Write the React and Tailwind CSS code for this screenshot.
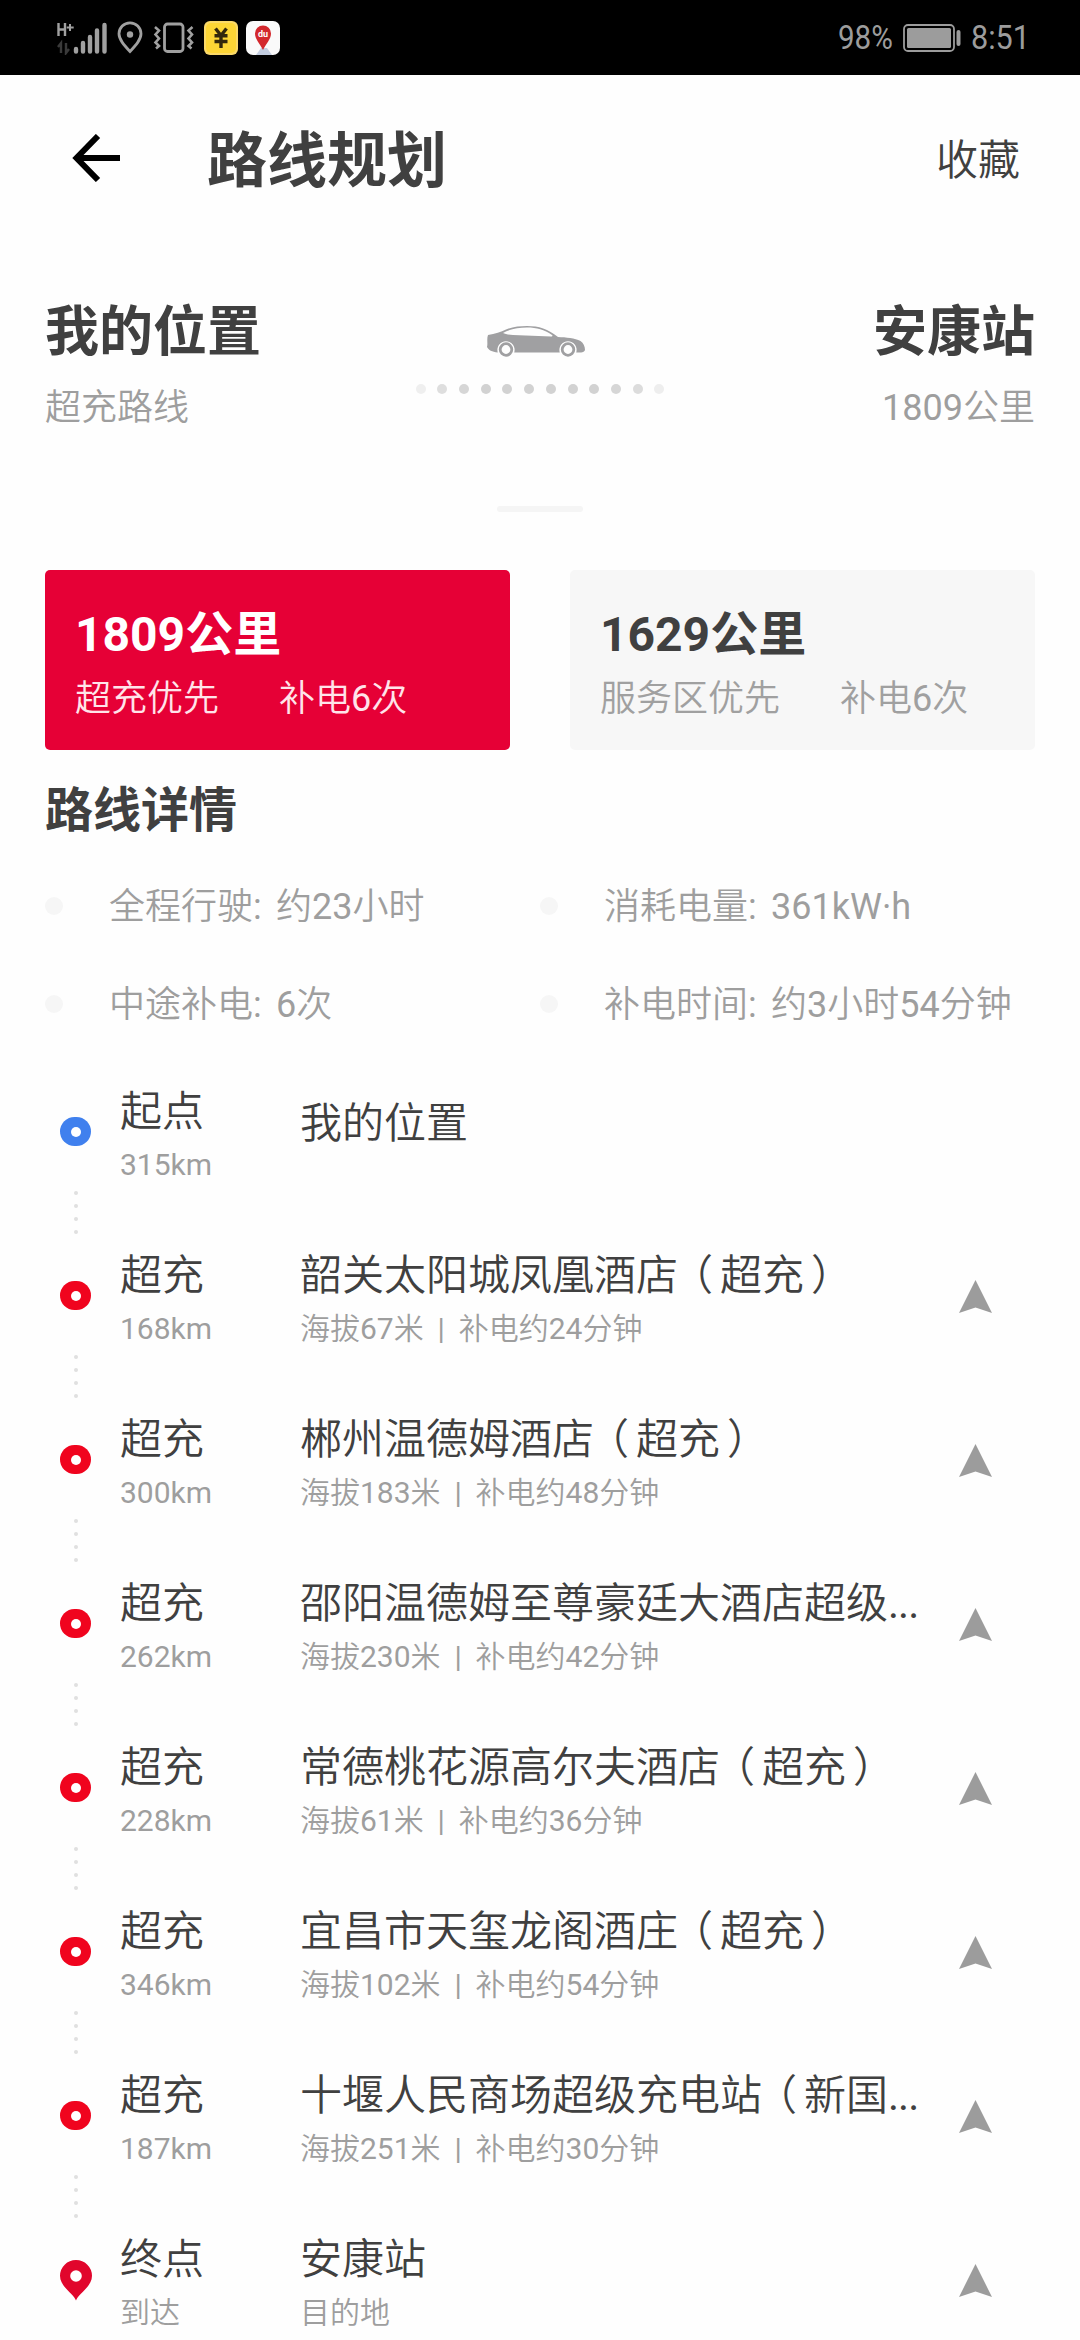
const STOPS = [
  { kind: "start", label: "起点", km: "315km", name: "我的位置" },
  { kind: "stop", label: "超充", km: "168km", name: "韶关太阳城凤凰酒店（超充）", note: ["海拔67米", "补电约24分钟"] },
  { kind: "stop", label: "超充", km: "300km", name: "郴州温德姆酒店（超充）", note: ["海拔183米", "补电约48分钟"] },
  { kind: "stop", label: "超充", km: "262km", name: "邵阳温德姆至尊豪廷大酒店超级...", note: ["海拔230米", "补电约42分钟"] },
  { kind: "stop", label: "超充", km: "228km", name: "常德桃花源高尔夫酒店（超充）", note: ["海拔61米", "补电约36分钟"] },
  { kind: "stop", label: "超充", km: "346km", name: "宜昌市天玺龙阁酒庄（超充）", note: ["海拔102米", "补电约54分钟"] },
  { kind: "stop", label: "超充", km: "187km", name: "十堰人民商场超级充电站（新国...", note: ["海拔251米", "补电约30分钟"] },
  { kind: "end", label: "终点", km: "到达", name: "安康站", note: ["目的地"] },
];

const DETAILS = [
  ["全程行驶:", "约23小时"],
  ["消耗电量:", "361kW·h"],
  ["中途补电:", "6次"],
  ["补电时间:", "约3小时54分钟"],
];

/* Sets digits and Latin letters at normal weight beside lighter Chinese,
   and centres full-width brackets in their cell. */
function Mixed({ text }) {
  return text.split(/([\x20-\x7e·]+|[（）])/).map((part, i) => {
    if (part === "（") return <span key={i} className="pr-[7px] pl-[14px] [font-feature-settings:'halt']">（</span>;
    if (part === "）") return <span key={i} className="pr-[14px] pl-[7px] [font-feature-settings:'halt']">）</span>;
    if (part === "...") return <span key={i} className="font-normal tracking-[-1px]">...</span>;
    return i % 2 ? <span key={i} className="font-normal">{part}</span> : part;
  });
}

function StatusBar() {
  return (
    <div className="flex h-[75px] shrink-0 items-center justify-between bg-black pr-[52px] pl-[56px] text-[#9c9c9c]">
      <div className="flex items-center">
        <svg width="52" height="34" viewBox="0 0 52 34" fill="none" stroke="#a0a0a0">
          <path d="M2.5 2v13M9 2v13M2.5 8.5H9" strokeWidth="2.4" />
          <path d="M14 3v7M10.7 6.5h7" strokeWidth="2" />
          <path d="M5 32V22l-3 4M10 22v10l3-4" stroke="#3a3a3a" strokeWidth="2.4" />
          <path d="M20 28v2.500M27 22v8.500M34 16v14.500M41 9.500v21M48.500 4v26.500" strokeWidth="4.400" strokeLinecap="round" />
        </svg>
        <svg className="ml-[9px]" width="26" height="34" viewBox="0 0 26 34" fill="none">
          <path d="M13 30.500C7 24 2 18.500 2 12.800a11 11 0 0 1 22 0C24 18.500 19 24 13 30.500Z" stroke="#a0a0a0" strokeWidth="2.800" />
          <circle cx="13" cy="13.500" r="3.200" fill="#a0a0a0" />
        </svg>
        <svg className="ml-[10px]" width="42" height="34" viewBox="0 0 42 34" fill="none" stroke="#a0a0a0">
          <rect x="11.500" y="3" width="18.500" height="27.500" rx="3" strokeWidth="2.800" />
          <path d="M2 6l4 3.500-3.500 4L6 17.500 2.500 21.500 6 25l-3 2.500M39.500 6l-4 3.500 3.500 4-3.500 4 3.500 4-3.500 3.500 3 2.500" strokeWidth="2.600" />
        </svg>
        <svg className="ml-[9px]" width="34" height="34" viewBox="0 0 34 34">
          <rect width="34" height="34" rx="6" fill="#fbd968" />
          <rect x="2" y="2" width="30" height="30" rx="5" fill="#fdd535" />
          <path d="M11.500 7.500l5.500 7 5.500-7M10.500 14.800h13M10.500 20.500h13M17 14v13" fill="none" stroke="#33270c" strokeWidth="3.400" />
        </svg>
        <svg className="ml-[8px]" width="34" height="34" viewBox="0 0 34 34">
          <rect width="34" height="34" rx="7" fill="#fafafa" />
          <path d="M10 34l5-7h6l5 7Z" fill="#c3cde0" />
          <path d="M17 29C13.500 22 9 18 9 12.500a8 8 0 0 1 16 0C25 18 20.500 22 17 29Z" fill="#d3282d" />
          <text x="17" y="16" textAnchor="middle" fontSize="9" fontWeight="700" fill="#fff" fontFamily="Roboto, sans-serif">du</text>
        </svg>
      </div>
      <div className="flex items-center text-[34px] leading-[77px]">
        <span className="w-[55px] origin-left scale-x-[0.87] whitespace-nowrap">98%</span>
        <svg className="ml-[10px]" width="58" height="28" viewBox="0 0 58 28">
          <rect x="1" y="1" width="50" height="26" rx="4" fill="none" stroke="#9c9c9c" strokeWidth="1.800" />
          <rect x="4" y="4" width="44" height="20" rx="1.500" fill="#9c9c9c" />
          <rect x="53.500" y="6" width="4" height="16" rx="2" fill="#9c9c9c" />
        </svg>
        <span className="ml-[10px] w-[57px] origin-left scale-x-[0.9] whitespace-nowrap">8:51</span>
      </div>
    </div>
  );
}

function Car() {
  return (
    <svg width="98" height="32" viewBox="0 0 98 32">
      <path
        fill="#a0a0a2"
        fillRule="evenodd"
        d="M1 9C8 8 14 6 19 3.500 25 .8 33 0 40 0 52 0 61 3 71 11c8 .4 17 1 22.500 4 3 2 4.500 5.500 4.500 9-.5 1.500-2 2.500-4 2.500h-4.800a8.600 8.600 0 1 0-16.400 0H27.200a8.600 8.600 0 1 0-16.400 0C5 26 1.500 24 0 21c1-4-.5-8 1-12ZM16 7c2 1.200 6 1.800 10 2l38 1.500c1.500 0 2-.8 1-1.600C57 3.500 50 1.500 40 1.500 31 1.500 23 3 16 7Z"
      />
      <circle cx="19" cy="23.500" r="5.800" fill="none" stroke="#a0a0a2" strokeWidth="2.800" />
      <circle cx="81" cy="23.500" r="5.800" fill="none" stroke="#a0a0a2" strokeWidth="2.800" />
    </svg>
  );
}

const TRAIL = [
  "bg-[#efefef]", "bg-[#dedede]", "bg-[#d6d6d6]", "bg-[#d2d2d2]", "bg-[#d2d2d2]", "bg-[#d2d2d2]",
  "bg-[#d2d2d2]", "bg-[#d2d2d2]", "bg-[#d2d2d2]", "bg-[#d6d6d6]", "bg-[#dcdcdc]", "bg-[#eeeeee]",
];

function RouteCard({ active, distance, mode }) {
  return (
    <div className={`h-[180px] w-[465px] rounded-[5px] px-[30px] pt-[35px] ${active ? "bg-[#e60036] text-white" : "bg-[#f7f7f7] text-[#404040]"}`}>
      <div className="h-[60px] text-[48px] leading-[60px] font-bold">{distance}</div>
      <div className={`mt-[10px] flex h-[48px] gap-[60px] text-[36px] leading-[48px] font-[350] ${active ? "text-[#ffe4ea]" : "text-[#a0a0a0]"}`}>
        <span>{mode}</span>
        <span><Mixed text="补电6次" /></span>
      </div>
    </div>
  );
}

function Marker({ kind }) {
  if (kind === "end") {
    return (
      <svg className="mt-[42px]" width="32" height="41" viewBox="0 0 32 41">
        <path d="M16 40.500C14 34 0 27 0 15.800a16 15.800 0 0 1 32 0C32 27 18 34 16 40.500Z" fill="#e1062c" />
        <circle cx="16" cy="16" r="5.800" fill="#fff" />
      </svg>
    );
  }
  return (
    <span className={`mt-[47px] flex size-[31px] items-center justify-center rounded-full ${kind === "start" ? "bg-[#4080ee]" : "bg-[#f0041e]"}`}>
      <span className="size-[10px] rounded-full bg-white" />
    </span>
  );
}

function Stop({ stop }) {
  return (
    <li className="flex h-[164px] shrink-0 pl-[45px]">
      <div className="flex w-[61px] flex-col items-center">
        <Marker kind={stop.kind} />
        {stop.kind !== "end" && (
          <div className="mt-[45px] flex flex-col gap-[9px] pl-px">
            {[0, 1, 2, 3].map((i) => (
              <span key={i} className="size-[4px] rounded-full bg-[#e0e0e0]" />
            ))}
          </div>
        )}
      </div>
      <div className="w-[194px] pt-[16px] pl-[14px]">
        <div className="h-[52px] text-[42px] leading-[52px] font-[350] text-[#404040]">{stop.label}</div>
        <div className="mt-[7px] h-[40px] text-[30px] leading-[40px] font-[350] text-[#9e9e9e]">
          <Mixed text={stop.km} />
        </div>
      </div>
      <div className={`grow ${stop.note ? "pt-[16px]" : "pt-[28px]"}`}>
        <div className="h-[52px] text-[42px] leading-[52px] font-[350] whitespace-nowrap text-[#404040]">
          <Mixed text={stop.name} />
        </div>
        {stop.note && (
          <div className="mt-[7px] flex h-[40px] text-[30px] leading-[40px] font-[350] whitespace-nowrap text-[#9e9e9e]">
            <span><Mixed text={stop.note[0]} /></span>
            {stop.note[1] && <span className="w-[35px] text-center font-normal">|</span>}
            {stop.note[1] && <span><Mixed text={stop.note[1]} /></span>}
          </div>
        )}
      </div>
      {stop.note && (
        <svg className="mt-[46px] mr-[88px]" width="33" height="33" viewBox="0 0 33 33">
          <path d="M16.500 0 33 33 16.500 27.500 0 33Z" fill="#9c9c9c" />
        </svg>
      )}
    </li>
  );
}

export default function App() {
  return (
    <main className="flex h-[2340px] w-[1080px] flex-col overflow-hidden bg-[#fefefe] font-['Roboto','Noto_Sans_CJK_SC',sans-serif] text-[#404040]">
      <StatusBar />
      <header className="flex h-[170px] shrink-0 items-center pr-[60px] pl-[72px]">
        <svg className="mb-[4px]" width="48" height="48" viewBox="0 0 48 48" fill="none" stroke="#000" strokeWidth="6">
          <path d="M26 2 4.500 24 26 46M4 24h44" />
        </svg>
        <h1 className="mt-[4px] ml-[87px] text-[60px] leading-[80px] font-bold">路线规划</h1>
        <button className="mt-[2px] ml-auto text-[42px] leading-[60px] font-[350] text-[#404040]">收藏</button>
      </header>

      <section className="flex h-[254px] shrink-0 justify-between px-[45px] pt-[53px]">
        <div className="w-[320px]">
          <div className="h-[70px] text-[54px] leading-[70px] font-bold">我的位置</div>
          <div className="mt-[16px] text-[36px] leading-[48px] font-[350] text-[#9e9e9e]">超充路线</div>
        </div>
        <div className="flex flex-col items-center pt-[28px]">
          <div className="pr-[8px]"><Car /></div>
          <div className="mt-[26px] flex gap-[11.7px]">
            {TRAIL.map((tone, i) => (
              <span key={i} className={`size-[10px] rounded-full ${tone}`} />
            ))}
          </div>
          <div className="mt-[112px] h-[6px] w-[86px] shrink-0 rounded-full bg-[#f5f5f5]" />
        </div>
        <div className="w-[320px] text-right">
          <div className="h-[70px] text-[54px] leading-[70px] font-bold">安康站</div>
          <div className="mt-[16px] text-[36px] leading-[48px] font-[350] text-[#9e9e9e]">
            <Mixed text="1809公里" />
          </div>
        </div>
      </section>

      <section className="mt-[71px] flex shrink-0 gap-[60px] px-[45px]">
        <RouteCard active distance="1809公里" mode="超充优先" />
        <RouteCard distance="1629公里" mode="服务区优先" />
      </section>

      <section className="h-[320px] shrink-0 px-[45px] pt-[31px]">
        <h2 className="h-[60px] text-[48px] leading-[60px] font-bold">路线详情</h2>
        <div className="mt-[17px] grid grid-cols-2">
          {DETAILS.map(([label, value]) => (
            <div key={label} className="flex h-[98px] items-center text-[36px] font-[350] whitespace-nowrap text-[#9e9e9e]">
              <span className="mb-[3px] size-[18px] rounded-full bg-[#f6f6f6]" />
              <span className="ml-[46px] w-[167px]"><Mixed text={label} /></span>
              <span><Mixed text={value} /></span>
            </div>
          ))}
        </div>
      </section>

      <ul className="flex shrink-0 flex-col">
        {STOPS.map((stop) => (
          <Stop key={stop.km} stop={stop} />
        ))}
      </ul>
    </main>
  );
}
